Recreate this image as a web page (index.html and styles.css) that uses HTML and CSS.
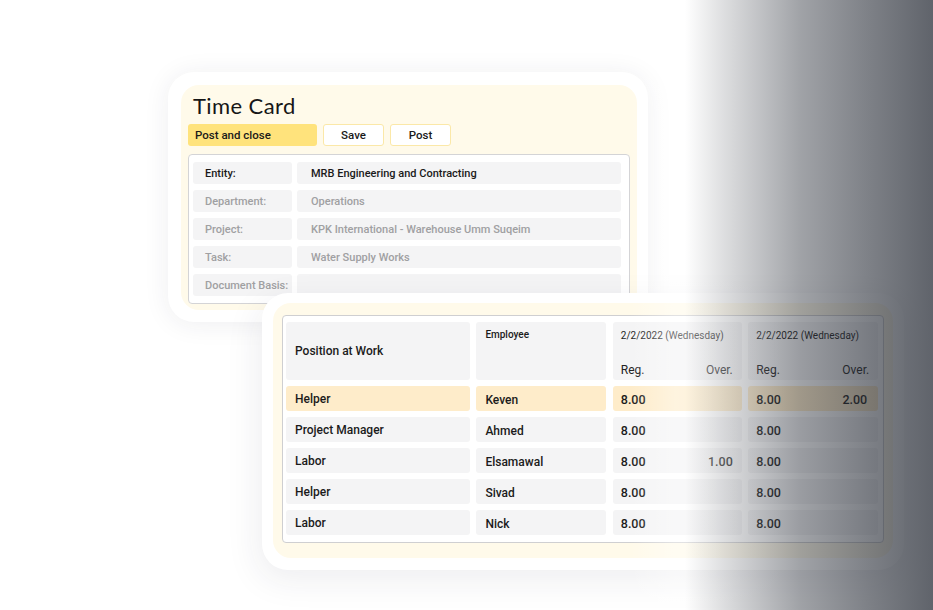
FILE: index.html
```html
<!DOCTYPE html>
<html>
<head>
<meta charset="utf-8">
<link rel="stylesheet" href="styles.css">
</head>
<body>
<div class="stage">
  <div class="card card-top">
    <div class="panel panel-top">
      <h1 class="title">Time Card</h1>
      <div class="actions">
        <button class="btn btn-primary">Post and close</button>
        <button class="btn btn-plain">Save</button>
        <button class="btn btn-plain">Post</button>
      </div>
      <div class="form-box">
        <div class="form-row strong"><div class="f-label">Entity:</div><div class="f-value">MRB Engineering and Contracting</div></div>
        <div class="form-row"><div class="f-label">Department:</div><div class="f-value">Operations</div></div>
        <div class="form-row"><div class="f-label">Project:</div><div class="f-value">KPK International - Warehouse Umm Suqeim</div></div>
        <div class="form-row"><div class="f-label">Task:</div><div class="f-value">Water Supply Works</div></div>
        <div class="form-row"><div class="f-label">Document Basis:</div><div class="f-value"></div></div>
      </div>
    </div>
  </div>

  <div class="card card-bottom">
    <div class="panel panel-bottom">
      <div class="table-box">
        <div class="cell head head-pos">Position at Work</div>
        <div class="cell head head-emp">Employee</div>
        <div class="cell head head-date"><span class="date-t">2/2/2022 (Wednesday)</span><span class="sub"><span>Reg.</span><span>Over.</span></span></div>
        <div class="cell head head-date"><span class="date-t">2/2/2022 (Wednesday)</span><span class="sub"><span>Reg.</span><span>Over.</span></span></div>

        <div class="cell hl">Helper</div>
        <div class="cell hl emp">Keven</div>
        <div class="cell hl num"><span>8.00</span><span></span></div>
        <div class="cell hl num last"><span>8.00</span><span>2.00</span></div>

        <div class="cell">Project Manager</div>
        <div class="cell emp">Ahmed</div>
        <div class="cell num"><span>8.00</span><span></span></div>
        <div class="cell num last"><span>8.00</span><span></span></div>

        <div class="cell">Labor</div>
        <div class="cell emp">Elsamawal</div>
        <div class="cell num"><span>8.00</span><span>1.00</span></div>
        <div class="cell num last"><span>8.00</span><span></span></div>

        <div class="cell">Helper</div>
        <div class="cell emp">Sivad</div>
        <div class="cell num"><span>8.00</span><span></span></div>
        <div class="cell num last"><span>8.00</span><span></span></div>

        <div class="cell">Labor</div>
        <div class="cell emp">Nick</div>
        <div class="cell num"><span>8.00</span><span></span></div>
        <div class="cell num last"><span>8.00</span><span></span></div>
      </div>
    </div>
  </div>

  <div class="fade"></div>
</div>
</body>
</html>
```

FILE: styles.css
```css
* { box-sizing: border-box; }
html, body { margin: 0; padding: 0; background: #ffffff; }
body { font-family: Roboto, "Noto Sans", "Liberation Sans", sans-serif; color: #1c1c1c; }

.stage {
  position: relative;
  width: 933px;
  height: 610px;
  overflow: hidden;
  background: #ffffff;
  padding: 72px 0 0 168px;
  display: flex;
  flex-direction: column;
  align-items: flex-start;
}

.card {
  background: #ffffff;
  border-radius: 26px;
}
.panel {
  background: #fffaea;
  border-radius: 18px;
  height: 100%;
}

/* top card */
.card-top {
  width: 480px;
  height: 250px;
  padding: 13px 11px 12px 13px;
  box-shadow: 0 2px 26px rgba(40, 40, 70, 0.08);
}
.panel-top {
  padding: 7px 7px 0 7px;
  overflow: hidden;
  display: flex;
  flex-direction: column;
}
.title {
  margin: 0 0 4px 5px;
  font-family: Lato, Inter, sans-serif;
  font-weight: 400;
  font-size: 22px;
  line-height: 28px;
  letter-spacing: 0.4px;
  color: #161616;
}
.actions {
  display: flex;
  gap: 6px;
  height: 22px;
  margin-bottom: 8px;
}
.btn {
  font-family: Roboto, "Noto Sans", sans-serif;
  font-weight: 500;
  font-size: 11.5px;
  color: #1a1a1a;
  border-radius: 3px;
  height: 22px;
  padding: 0;
  cursor: default;
}
.btn-primary {
  width: 129px;
  background: #ffe37c;
  border: none;
  text-align: left;
  padding-left: 7px;
}
.btn-plain {
  width: 61px;
  background: #ffffff;
  border: 1px solid #fbe8a8;
}
.form-box {
  width: 442px;
  background: #ffffff;
  border: 1px solid #d4d4d6;
  border-radius: 4px;
  padding: 7px 8px 7px 4px;
  display: flex;
  flex-direction: column;
  gap: 6px;
}
.form-row {
  display: flex;
  gap: 5px;
  height: 22px;
  font-size: 11px;
  font-weight: 500;
  color: #a0a0a2;
}
.form-row.strong { color: #1a1a1a; }
.f-label, .f-value {
  background: #f4f4f5;
  border-radius: 3px;
  display: flex;
  align-items: center;
}
.f-label { width: 99px; padding-left: 12px; }
.f-value { flex: 1; padding-left: 14px; }

/* bottom card */
.card-bottom {
  position: relative;
  margin: -29px 0 0 94px;
  width: 642px;
  height: 277px;
  padding: 10px 11px 12px 11px;
  box-shadow: -4px 10px 34px rgba(40, 40, 70, 0.08);
}
.panel-bottom {
  padding: 12px 9px 15px 9px;
}
.table-box {
  height: 228px;
  background: #ffffff;
  border: 1px solid #cfcfd1;
  border-radius: 4px;
  padding: 6px 4px 6px 3px;
  display: grid;
  grid-template-columns: 184px 130px 129px 130px;
  grid-template-rows: 58px repeat(5, 25px);
  row-gap: 6px;
  column-gap: 6.4px;
}
.cell {
  background: #f4f4f5;
  border-radius: 3px;
  display: flex;
  align-items: center;
  padding: 0 9px;
  font-size: 12px;
  font-weight: 500;
  color: #1b1b1b;
}
.cell.emp { padding-top: 2px; }
.cell.hl { background: #feecca; }
.head-emp {
  align-items: flex-start;
  padding-top: 7px;
  font-size: 10px;
}
.head-date {
  flex-direction: column;
  align-items: stretch;
  justify-content: space-between;
  padding: 8px 9px 3px 8px;
  font-size: 10px;
  font-weight: 400;
  color: #222;
}
.head-date .sub {
  display: flex;
  justify-content: space-between;
  font-size: 12px;
  font-weight: 400;
}
.num {
  justify-content: space-between;
  padding: 2px 9px 0 8px;
  font-size: 12.5px;
  font-weight: 500;
}
.num.last { padding-right: 11px; }

/* right-side fade overlay */
.fade {
  position: absolute;
  top: 0;
  left: 600px;
  width: 333px;
  height: 610px;
  pointer-events: none;
  background:
    linear-gradient(to right,
      rgba(40, 45, 55, 0) 0px,
      rgba(40, 45, 55, 0) 85px,
      rgba(40, 45, 55, 0.16) 125px,
      rgba(40, 45, 55, 0.44) 200px,
      rgba(40, 45, 55, 0.6) 268px,
      rgba(40, 45, 55, 0.74) 333px),
    linear-gradient(to right,
      rgba(255, 255, 255, 0) 30px,
      rgba(255, 255, 255, 0.4) 75px,
      rgba(255, 255, 255, 0.35) 110px,
      rgba(255, 255, 255, 0) 190px);
}
```
